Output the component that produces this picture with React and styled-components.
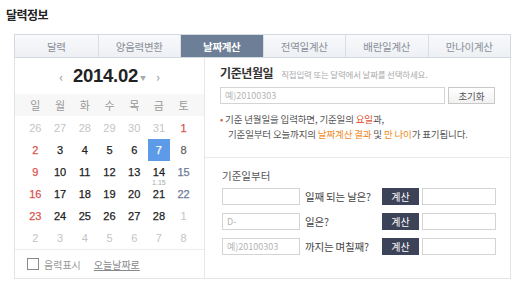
import React from 'react';
import styled, { createGlobalStyle } from 'styled-components';

const GlobalStyle = createGlobalStyle`
  body {
    margin: 0;
    background: #fff;
    font-family: 'Noto Sans CJK KR', 'Noto Sans', sans-serif;
    color: #333;
  }
`;

const Page = styled.div`
  width: 520px;
  height: 288px;
  padding: 7px 0 0 6px;
  box-sizing: border-box;
`;

const Title = styled.h1`
  margin: 0;
  font-size: 12px;
  font-weight: bold;
  line-height: 16px;
  color: #222;
  letter-spacing: -0.5px;
`;

const Box = styled.div`
  margin: 11px 0 0 8px;
  width: 497px;
`;

const Tabs = styled.div`
  display: grid;
  grid-template-columns: repeat(6, 1fr);
  height: 24px;
  border: 1px solid #d3d9e0;
  box-sizing: border-box;
  background: linear-gradient(#f8f9fb, #edf0f4);
`;

const Tab = styled.div`
  display: flex;
  align-items: center;
  justify-content: center;
  font-size: 10.5px;
  letter-spacing: -0.3px;
  color: ${(p) => (p.$active ? '#fff' : '#8a8f99')};
  font-weight: ${(p) => (p.$active ? 'bold' : 'normal')};
  background: ${(p) => (p.$active ? '#6d7f97' : 'transparent')};
  border-left: ${(p) => (p.$first ? 'none' : '1px solid #d9dee5')};
`;

const Body = styled.div`
  display: flex;
  height: 221px;
  border: 1px solid #e4e4e4;
  border-top: none;
  box-sizing: border-box;
`;

const Calendar = styled.div`
  width: 192px;
  border-right: 1px solid #e6e6e6;
  display: flex;
  flex-direction: column;
`;

const MonthBar = styled.div`
  height: 36px;
  display: flex;
  align-items: center;
  justify-content: center;
  gap: 10px;
  color: #999;
  font-size: 13px;
`;

const Month = styled.span`
  font-family: 'Liberation Sans', Arial, sans-serif;
  font-size: 18.5px;
  font-weight: bold;
  color: #222;
  letter-spacing: -0.3px;
`;

const Caret = styled.span`
  font-size: 6px;
  color: #aaa;
  margin-left: -8px;
  margin-top: 3px;
`;

const Grid = styled.div`
  display: grid;
  grid-template-columns: repeat(7, 1fr);
  padding: 0 8px;
`;

const WeekRow = styled(Grid)`
  height: 22px;
  background: #f7f7f7;
  align-items: center;
`;

const WeekDay = styled.div`
  text-align: center;
  font-size: 11px;
  color: #999;
`;

const Days = styled(Grid)`
  grid-auto-rows: 22px;
  padding-top: 1px;
`;

const Day = styled.div`
  position: relative;
  display: flex;
  align-items: center;
  justify-content: center;
  font-family: 'Liberation Sans', Arial, sans-serif;
  font-size: 11px;
  -webkit-text-stroke: ${(p) => (p.$muted ? '0' : '0.25px')};
  color: ${(p) => p.$color};
  background: ${(p) => (p.$selected ? '#5d9be8' : 'transparent')};
  margin: 0 1px;
`;

const Lunar = styled.span`
  position: absolute;
  bottom: -3px;
  left: 0;
  right: 0;
  text-align: center;
  font-size: 7px;
  -webkit-text-stroke: 0;
  color: #aaa;
`;

const CalFooter = styled.div`
  margin-top: auto;
  height: 28px;
  border-top: 1px solid #ececec;
  display: flex;
  align-items: center;
  padding-left: 12px;
  gap: 5px;
  font-size: 10px;
  color: #999;
`;

const CheckBox = styled.span`
  width: 10px;
  height: 10px;
  border: 1px solid #888;
  background: #fff;
`;

const TodayLink = styled.span`
  margin-left: 8px;
  text-decoration: underline;
  color: #888;
`;

const Right = styled.div`
  flex: 1;
  display: flex;
  flex-direction: column;
`;

const Section = styled.div`
  padding: ${(p) => p.$pad};
  height: ${(p) => (p.$h ? `${p.$h}px` : 'auto')};
  border-bottom: ${(p) => (p.$line ? '1px solid #ebebeb' : 'none')};
  flex: ${(p) => (p.$grow ? 1 : 'none')};
`;

const Heading = styled.div`
  display: flex;
  align-items: baseline;
  gap: 8px;
  font-size: 12px;
  font-weight: bold;
  color: #333;
  letter-spacing: -0.4px;
`;

const Hint = styled.span`
  font-size: 8.5px;
  font-weight: normal;
  color: #aaa;
  letter-spacing: -0.2px;
`;

const InputRow = styled.div`
  display: flex;
  gap: 3px;
  margin-top: 6px;
`;

const Field = styled.div`
  width: ${(p) => p.$w}px;
  height: 17px;
  box-sizing: border-box;
  border: 1px solid #d4d4d4;
  background: #fff;
  display: flex;
  align-items: center;
  padding-left: 4px;
  font-size: 9px;
  color: #b5b5b5;
`;

const ResetButton = styled.button`
  width: 47px;
  height: 17px;
  padding: 0;
  border: 1px solid #c9c9c9;
  background: linear-gradient(#fff, #f1f1f1);
  font-family: inherit;
  font-size: 9.5px;
  color: #555;
`;

const Notes = styled.p`
  margin: 8px 0 0;
  font-size: 9.5px;
  line-height: 15px;
  color: #555;
  letter-spacing: -0.15px;
`;

const Bullet = styled.span`
  color: #d85c3a;
  margin-right: 2px;
`;

const Indent = styled.span`
  display: block;
  padding-left: 8px;
`;

const Em = styled.span`
  color: ${(p) => p.$c};
`;

const SubTitle = styled.div`
  font-size: 10.5px;
  color: #555;
  margin-bottom: 5px;
`;

const CalcRows = styled.div`
  display: flex;
  flex-direction: column;
  gap: 8px;
`;

const CalcRow = styled.div`
  display: grid;
  grid-template-columns: 78px 76px 37px 74px;
  column-gap: 3px;
  align-items: center;
`;

const CalcLabel = styled.span`
  font-size: 10.5px;
  color: #444;
  letter-spacing: -0.2px;
  padding-left: 2px;
`;

const CalcButton = styled.button`
  height: 17px;
  padding: 0;
  border: none;
  background: #3c4257;
  color: #fff;
  font-family: inherit;
  font-size: 10px;
`;

const tabs = ['달력', '양음력변환', '날짜계산', '전역일계산', '배란일계산', '만나이계산'];
const weekDays = ['일', '월', '화', '수', '목', '금', '토'];

const RED = '#d9534f';
const DARK = '#222';
const BLUE = '#6e7a95';
const LIGHT = '#c4c4c4';

const days = [
  [26, LIGHT, true], [27, LIGHT, true], [28, LIGHT, true], [29, LIGHT, true], [30, LIGHT, true], [31, LIGHT, true], [1, RED],
  [2, RED], [3, DARK], [4, DARK], [5, DARK], [6, DARK], [7, '#fff', false, true], [8, '#666'],
  [9, RED], [10, DARK], [11, DARK], [12, DARK], [13, DARK], [14, DARK, false, false, '1.15'], [15, BLUE],
  [16, RED], [17, DARK], [18, DARK], [19, DARK], [20, DARK], [21, DARK], [22, BLUE],
  [23, RED], [24, DARK], [25, DARK], [26, DARK], [27, DARK], [28, DARK], [1, LIGHT, true],
  [2, LIGHT, true], [3, LIGHT, true], [4, LIGHT, true], [5, LIGHT, true], [6, LIGHT, true], [7, LIGHT, true], [8, LIGHT, true],
];

const calcRows = [
  { placeholder: '', label: '일째 되는 날은?' },
  { placeholder: 'D-', label: '일은?' },
  { placeholder: '예)20100303', label: '까지는 며칠째?' },
];

export default function App() {
  return (
    <>
      <GlobalStyle />
      <Page>
        <Title>달력정보</Title>
        <Box>
          <Tabs>
            {tabs.map((t, i) => (
              <Tab key={t} $first={i === 0} $active={i === 2}>
                {t}
              </Tab>
            ))}
          </Tabs>
          <Body>
            <Calendar>
              <MonthBar>
                <span>‹</span>
                <Month>2014.02</Month>
                <Caret>▼</Caret>
                <span>›</span>
              </MonthBar>
              <WeekRow>
                {weekDays.map((d) => (
                  <WeekDay key={d}>{d}</WeekDay>
                ))}
              </WeekRow>
              <Days>
                {days.map(([n, color, muted, selected, lunar], i) => (
                  <Day key={i} $color={color} $muted={muted} $selected={selected}>
                    {n}
                    {lunar && <Lunar>{lunar}</Lunar>}
                  </Day>
                ))}
              </Days>
              <CalFooter>
                <CheckBox />
                <span>음력표시</span>
                <TodayLink>오늘날짜로</TodayLink>
              </CalFooter>
            </Calendar>
            <Right>
              <Section $pad="6px 14px 0 15px" $h={93} $line>
                <Heading>
                  기준년월일
                  <Hint>직접입력 또는 달력에서 날짜를 선택하세요.</Hint>
                </Heading>
                <InputRow>
                  <Field $w={225}>예)20100303</Field>
                  <ResetButton>초기화</ResetButton>
                </InputRow>
                <Notes>
                  <Bullet>•</Bullet>기준 년월일을 입력하면, 기준일의 <Em $c="#e0502a">요일</Em>과,
                  <Indent>
                    기준일부터 오늘까지의 <Em $c="#f08a24">날짜계산 결과</Em> 및{' '}
                    <Em $c="#f08a24">만 나이</Em>가 표기됩니다.
                  </Indent>
                </Notes>
              </Section>
              <Section $pad="10px 14px 0 17px" $grow>
                <SubTitle>기준일부터</SubTitle>
                <CalcRows>
                  {calcRows.map((r) => (
                    <CalcRow key={r.label}>
                      <Field $w={78}>{r.placeholder}</Field>
                      <CalcLabel>{r.label}</CalcLabel>
                      <CalcButton>계산</CalcButton>
                      <Field $w={74} />
                    </CalcRow>
                  ))}
                </CalcRows>
              </Section>
            </Right>
          </Body>
        </Box>
      </Page>
    </>
  );
}
